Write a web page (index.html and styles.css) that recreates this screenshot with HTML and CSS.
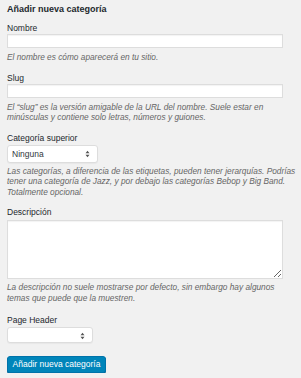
FILE: index.html
```html
<!DOCTYPE html>
<html lang="es">
<head>
    <meta charset="UTF-8">
    <meta name="viewport" content="width=device-width, initial-scale=1.0">
    <title>Añadir nueva categoría</title>
    <link rel="stylesheet" href="styles.css">
</head>
<body>
    <div class="form-wrap">
        <h2>Añadir nueva categoría</h2>
        <form id="addtag">
            <div class="form-field">
                <label for="tag-name">Nombre</label>
                <input type="text" id="tag-name">
                <p class="description">El nombre es cómo aparecerá en tu sitio.</p>
            </div>
            <div class="form-field">
                <label for="tag-slug">Slug</label>
                <input type="text" id="tag-slug">
                <p class="description">El “slug” es la versión amigable de la URL del nombre. Suele estar en minúsculas y contiene solo letras, números y guiones.</p>
            </div>
            <div class="form-field">
                <label for="parent">Categoría superior</label>
                <span class="select-wrap parent-select">
                    <select id="parent">
                        <option>Ninguna</option>
                    </select>
                    <svg class="arrows" width="5" height="8" viewBox="0 0 5 8"><path d="M0.5 3.2 L2.5 0.8 L4.5 3.2 Z M0.5 4.8 L2.5 7.2 L4.5 4.8 Z" fill="#555"/></svg>
                </span>
                <p class="description short">Las categorías, a diferencia de las etiquetas, pueden tener jerarquías. Podrías tener una categoría de Jazz, y por debajo las categorías Bebop y Big Band. Totalmente opcional.</p>
            </div>
            <div class="form-field">
                <label for="tag-description">Descripción</label>
                <textarea id="tag-description"></textarea>
                <p class="description short">La descripción no suele mostrarse por defecto, sin embargo hay algunos temas que puede que la muestren.</p>
            </div>
            <div class="form-field term-header">
                <label for="page-header">Page Header</label>
                <span class="select-wrap header-select">
                    <select id="page-header">
                        <option></option>
                    </select>
                    <svg class="arrows" width="5" height="8" viewBox="0 0 5 8"><path d="M0.5 3.2 L2.5 0.8 L4.5 3.2 Z M0.5 4.8 L2.5 7.2 L4.5 4.8 Z" fill="#555"/></svg>
                </span>
            </div>
            <p class="submit">
                <button type="button" class="button-primary">Añadir nueva categoría</button>
            </p>
        </form>
    </div>
</body>
</html>
```

FILE: styles.css
```css
body {
    font-family: "Liberation Sans", Arial, sans-serif;
    background-color: #f1f1f1;
    color: #23282d;
    margin: 0;
    padding: 0;
}
.form-wrap {
    padding: 0 3px 0 7px;
}
.form-wrap h2 {
    font-size: 9px;
    line-height: 12px;
    font-weight: bold;
    margin: 3px 0 8px 0;
}
.form-field {
    margin-bottom: 10px;
}
.form-field.term-header {
    margin-top: 12px;
    margin-bottom: 9px;
}
.form-field label {
    display: block;
    font-size: 8.5px;
    line-height: 11px;
}
.form-field input,
.form-field textarea {
    display: block;
    box-sizing: border-box;
    width: 95%;
    margin: 0;
    border: 1px solid #ddd;
    box-shadow: inset 0 1px 1px rgba(0, 0, 0, 0.05);
    background: white;
    font-family: inherit;
}
.form-field input {
    height: 14px;
}
.form-field textarea {
    height: 59px;
    margin-top: 2px;
}
.description {
    margin: 4px 0 0 0;
    font-size: 8.3px;
    line-height: 10.5px;
    font-style: italic;
    color: #666;
}
.description.short {
    margin-top: 3px;
}
.select-wrap {
    position: relative;
    display: inline-block;
    vertical-align: top;
}
.select-wrap select {
    -webkit-appearance: none;
    appearance: none;
    box-sizing: border-box;
    display: block;
    background: white;
    border: 1px solid #ddd;
    border-radius: 3px;
    box-shadow: 0 1px 1px rgba(0, 0, 0, 0.04);
    font-family: inherit;
    font-size: 8.5px;
    color: #32373c;
    padding: 0 4px;
    margin: 0;
}
.parent-select select {
    width: 91px;
    height: 18px;
    margin-top: 1px;
}
.header-select select {
    width: 86px;
    height: 16px;
    margin-top: 1px;
}
.select-wrap .arrows {
    position: absolute;
    right: 8px;
    top: 50%;
    margin-top: -3px;
}
.submit {
    margin: 0;
}
.button-primary {
    background: #0085ba;
    border: 1px solid #0073aa;
    border-radius: 3px;
    box-shadow: 0 1px 0 #006799;
    color: white;
    font-family: inherit;
    font-size: 8.5px;
    height: 17px;
    width: 99px;
    padding: 0;
    cursor: pointer;
}
```
